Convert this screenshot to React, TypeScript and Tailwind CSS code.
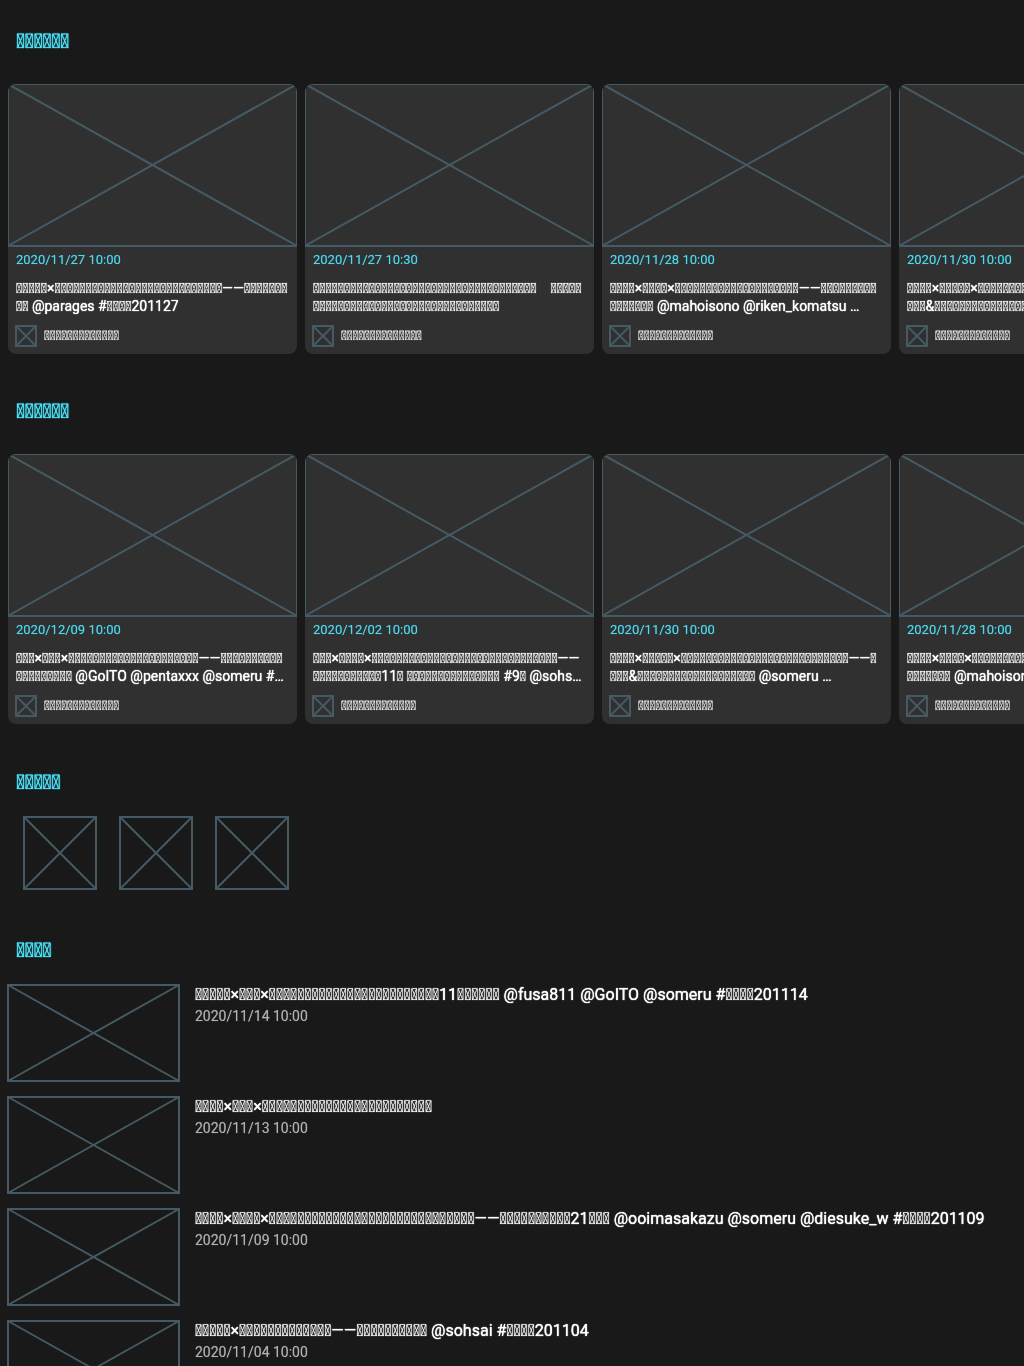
const box = (n: number) => "\uE000\u200B".repeat(n);

type Program = { date: string; title: string; channel: string };

const komatsu: Program = {
  date: "2020/11/28 10:00",
  title: `${box(4)}×${box(4)}×${box(20)}——${box(9)}${box(7)} @mahoisono @riken_komatsu\u00A0 @someru #${box(4)}201128`,
  channel: box(13),
};

const monday: Program = {
  date: "2020/11/30 10:00",
  title: `${box(4)}×${box(5)}×${box(27)}——${box(1)}${box(3)}&${box(19)} @someru\u00A0 @riken_komatsu #${box(4)}201130`,
  channel: box(13),
};

const upcoming: Program[] = [
  {
    date: "2020/11/27 10:00",
    title: `${box(5)}×${box(27)}——${box(7)}${box(2)} @parages #${box(4)}201127`,
    channel: box(13),
  },
  {
    date: "2020/11/27 10:30",
    title: `${box(36)}\u3000${box(35)}`,
    channel: box(14),
  },
  komatsu,
  monday,
];

const recent: Program[] = [
  {
    date: "2020/12/09 10:00",
    title: `${box(3)}×${box(3)}×${box(21)}——${box(10)}${box(9)} @GoITO @pentaxxx @someru #${box(4)}201209`,
    channel: box(13),
  },
  {
    date: "2020/12/02 10:00",
    title: `${box(3)}×${box(4)}×${box(30)}——${box(11)}11${box(1)} ${box(15)} #9${box(1)} @sohsai #${box(4)}201202`,
    channel: box(13),
  },
  monday,
  komatsu,
];

const archive = [
  {
    date: "2020/11/14 10:00",
    title: `${box(5)}×${box(3)}×${box(24)}11${box(6)} @fusa811 @GoITO @someru #${box(4)}201114`,
  },
  { date: "2020/11/13 10:00", title: `${box(4)}×${box(3)}×${box(24)}` },
  {
    date: "2020/11/09 10:00",
    title: `${box(4)}×${box(4)}×${box(29)}——${box(10)}21${box(3)} @ooimasakazu @someru @diesuke_w #${box(4)}201109`,
  },
  {
    date: "2020/11/04 10:00",
    title: `${box(5)}×${box(13)}——${box(10)} @sohsai #${box(4)}201104`,
  },
];

function Placeholder() {
  return (
    <svg className="block h-full w-full overflow-visible" stroke="#455a64" strokeWidth="2" fill="none" aria-hidden="true">
      <rect width="100%" height="100%" />
      <line x1="0" y1="0" x2="100%" y2="100%" />
      <line x1="100%" y1="0" x2="0" y2="100%" />
    </svg>
  );
}

function Heading({ children }: { children: string }) {
  return (
    <h2 className="px-4 text-xl leading-8 text-[#4de4fb] [text-shadow:0_0_1px_currentColor,0_0_1px_currentColor,0_0_1px_currentColor]">
      {children}
    </h2>
  );
}

function Card({ program }: { program: Program }) {
  return (
    <article className="w-[289px] shrink-0 overflow-hidden rounded-lg bg-[#303030]">
      <div className="h-[162px]">
        <Placeholder />
      </div>
      <div className="pt-[5px] pr-[9px] pb-2 pl-2">
        <p className="text-[13px] leading-[18px] text-[#4dd9f0] [text-shadow:0_0_1px_#4dd9f080]">{program.date}</p>
        <h3 className="mt-2.5 line-clamp-2 text-sm leading-[18px] [text-shadow:0_0_1px_currentColor,0_0_1px_#ffffff80]">
          {program.title}
        </h3>
        <div className="mt-[11px] flex gap-2">
          <div className="size-5 shrink-0">
            <Placeholder />
          </div>
          <p className="truncate text-[13px] leading-5 [text-shadow:0_0_1px_currentColor]">{program.channel}</p>
        </div>
      </div>
    </article>
  );
}

function CardRow({ title, programs }: { title: string; programs: Program[] }) {
  return (
    <section className="pt-[25px] pb-4">
      <Heading>{title}</Heading>
      <div className="mt-[27px] flex gap-2 overflow-x-auto px-2 [scrollbar-width:none]">
        {programs.map((program) => (
          <Card key={program.date} program={program} />
        ))}
      </div>
    </section>
  );
}

export default function App() {
  return (
    <main className="h-screen overflow-y-auto bg-[#191919] font-[Roboto,'Noto_Sans_CJK_JP',sans-serif] text-white [scrollbar-width:none]">
      <div className="will-change-transform">
        <CardRow title={box(6)} programs={upcoming} />
        <CardRow title={box(6)} programs={recent} />
        <section className="pt-[26px] pb-5">
          <Heading>{box(5)}</Heading>
          <div className="mt-[19px] flex gap-6 px-6">
            {[1, 2, 3].map((n) => (
              <div key={n} className="size-[72px]">
                <Placeholder />
              </div>
            ))}
          </div>
        </section>
        <section className="pt-[25px]">
          <Heading>{box(4)}</Heading>
          <ul className="mt-[19px] flex flex-col gap-4 px-2">
            {archive.map((item) => (
              <li key={item.date} className="flex gap-4">
                <div className="h-24 w-[171px] shrink-0">
                  <Placeholder />
                </div>
                <div className="min-w-0">
                  <h3 className="truncate text-base leading-5 [text-shadow:0_0_1px_currentColor,0_0_1px_#ffffff80]">{item.title}</h3>
                  <p className="text-sm leading-[22px] text-[#b3b3b3] [text-shadow:0_0_1px_#b3b3b380]">{item.date}</p>
                </div>
              </li>
            ))}
          </ul>
        </section>
      </div>
    </main>
  );
}
